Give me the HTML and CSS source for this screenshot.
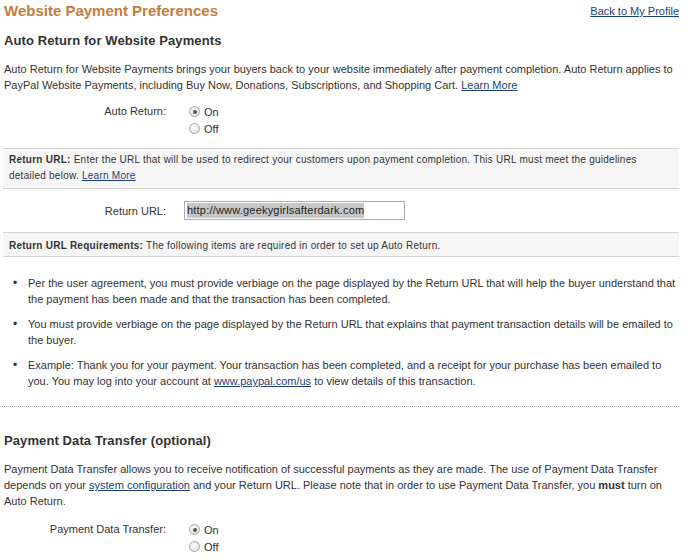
FILE: index.html
```html
<!DOCTYPE html>
<html>
<head>
<meta charset="utf-8">
<link rel="stylesheet" href="styles.css">
</head>
<body>
<div class="page">
  <div class="topbar">
    <h1 class="title">Website Payment Preferences</h1>
    <a class="link small" href="#">Back to My Profile</a>
  </div>

  <h2 class="section">Auto Return for Website Payments</h2>
  <p class="text">Auto Return for Website Payments brings your buyers back to your website immediately after payment completion. Auto Return applies to PayPal Website Payments, including Buy Now, Donations, Subscriptions, and Shopping Cart. <a class="link" href="#">Learn More</a></p>

  <div class="field radios-field">
    <div class="label">Auto Return:</div>
    <div class="options">
      <div class="opt"><span class="radio checked"></span><span>On</span></div>
      <div class="opt"><span class="radio"></span><span>Off</span></div>
    </div>
  </div>

  <div class="note note-first"><b>Return URL:</b> Enter the URL that will be used to redirect your customers upon payment completion. This URL must meet the guidelines detailed below. <a class="link" href="#">Learn More</a></div>

  <div class="field url-field">
    <div class="label">Return URL:</div>
    <div class="input"><span class="sel">http://www.geekygirlsafterdark.com</span></div>
  </div>

  <div class="note note-second"><b>Return URL Requirements:</b> The following items are required in order to set up Auto Return.</div>

  <ul class="reqs">
    <li>Per the user agreement, you must provide verbiage on the page displayed by the Return URL that will help the buyer understand that the payment has been made and that the transaction has been completed.</li>
    <li>You must provide verbiage on the page displayed by the Return URL that explains that payment transaction details will be emailed to the buyer.</li>
    <li>Example: Thank you for your payment. Your transaction has been completed, and a receipt for your purchase has been emailed to you. You may log into your account at <a class="link" href="#">www.paypal.com/us</a> to view details of this transaction.</li>
  </ul>

  <hr class="dotted">

  <h2 class="section section-2">Payment Data Transfer (optional)</h2>
  <p class="text">Payment Data Transfer allows you to receive notification of successful payments as they are made. The use of Payment Data Transfer depends on your <a class="link" href="#">system configuration</a> and your Return URL. Please note that in order to use Payment Data Transfer, you <b>must</b> turn on Auto Return.</p>

  <div class="field radios-field radios-2">
    <div class="label">Payment Data Transfer:</div>
    <div class="options">
      <div class="opt"><span class="radio checked"></span><span>On</span></div>
      <div class="opt"><span class="radio"></span><span>Off</span></div>
    </div>
  </div>
</div>
</body>
</html>
```
FILE: styles.css
```css
html, body {
  margin: 0;
  padding: 0;
  background: #fff;
}
body {
  font-family: "Liberation Sans", Arial, sans-serif;
  font-size: 11px;
  color: #333;
}
.page {
  width: 676px;
  padding: 1px 11px 0 3px;
}
.topbar {
  display: flex;
  justify-content: space-between;
  align-items: center;
  height: 20px;
}
.title {
  margin: 0 0 0 1px;
  font-size: 15px;
  line-height: 20px;
  font-weight: bold;
  color: #c47d3c;
}
.link {
  color: #1a3f7a;
  text-decoration: underline;
}
.small {
  font-size: 11px;
}
.section {
  margin: 11px 0 0 1px;
  font-size: 13px;
  letter-spacing: 0.1px;
  line-height: 18px;
  font-weight: bold;
  color: #333;
}
.text {
  margin: 11px 0 0 1px;
  line-height: 16px;
}
.field {
  display: flex;
}
.label {
  width: 163px;
  text-align: right;
  flex: none;
}
.radios-field {
  margin-top: 10px;
  column-gap: 23px;
}
.radios-field .label {
  line-height: 17px;
}
.options {
  display: flex;
  flex-direction: column;
}
.opt {
  display: flex;
  align-items: center;
  height: 17px;
  column-gap: 4px;
}
.radio {
  width: 9px;
  height: 9px;
  border: 1px solid #a8a8a8;
  border-radius: 50%;
  background: radial-gradient(circle at 40% 35%, #fdfdfd 0, #e4e4e4 70%, #d0d0d0 100%);
  display: flex;
  align-items: center;
  justify-content: center;
}
.radio.checked::after {
  content: "";
  width: 4px;
  height: 4px;
  border-radius: 50%;
  background: #555;
}
.note {
  background: #f6f6f6;
  border-top: 1px solid #d2d2d2;
  border-bottom: 1px solid #d2d2d2;
  padding: 3px 6px 4px 6px;
  font-size: 10px;
  letter-spacing: 0.25px;
  line-height: 16px;
}
.note-first {
  margin-top: 11px;
}
.url-field {
  margin-top: 12px;
  column-gap: 18px;
  align-items: center;
}
.input {
  width: 217px;
  height: 17px;
  border: 1px solid #a5acb2;
  padding: 0 0 0 2px;
  display: flex;
  align-items: center;
}
.sel {
  background: #c6c6c6;
  color: #222;
  letter-spacing: 0.2px;
  line-height: 15px;
}
.note-second {
  margin-top: 12px;
  padding: 5px 6px 2px 6px;
}
.reqs {
  margin: 18px 0 0 0;
  padding: 0 0 0 25px;
  list-style: none;
}
.reqs li {
  line-height: 16px;
  margin-bottom: 9px;
}
.reqs li::before {
  content: "\2022";
  display: inline-block;
  width: 15px;
  margin-left: -15px;
  font-size: 12px;
}
.reqs li:last-child {
  margin-bottom: 0;
}
.dotted {
  margin: 17px 0 0 -3px;
  border: 0;
  border-top: 1px dotted #aaa;
  height: 0;
}
.section-2 {
  margin-top: 25px;
}
.radios-2 {
  margin-top: 12px;
}
```
